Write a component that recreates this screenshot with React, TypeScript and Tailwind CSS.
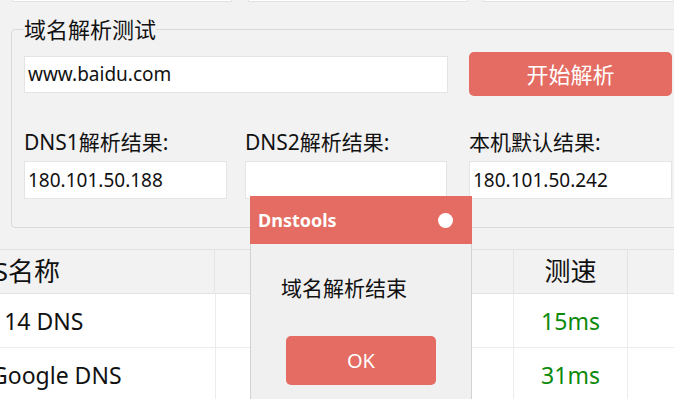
import React from "react";

const FONT = { fontFamily: '"Noto Sans", "Noto Sans CJK SC", sans-serif' };

const RESULTS = [
  { label: "DNS1解析结果:", value: "180.101.50.188", width: "w-[203px]", gap: "" },
  { label: "DNS2解析结果:", value: "", width: "w-[202px]", gap: "ml-[18px]" },
  { label: "本机默认结果:", value: "180.101.50.242", width: "w-[203px]", gap: "ml-[22px]" },
];

const ROWS = [
  { name: "114 DNS", speed: "15ms" },
  { name: "Google DNS", speed: "31ms" },
];

const App: React.FC = () => {
  return (
    <div style={FONT} className="relative h-[399px] w-[674px] overflow-hidden bg-[#f2f2f2] text-[#111]">
      {/* bottoms of the inputs above */}
      <div className="flex h-[2px] items-end">
        <div className="ml-[12px] h-[2px] w-[231px] border-b border-x border-[#e2e2e2] bg-white" />
        <div className="ml-[16px] h-[2px] w-[231px] border-b border-x border-[#e2e2e2] bg-white" />
        <div className="ml-[15px] h-[2px] w-[200px] border-b border-x border-[#e2e2e2] bg-white" />
      </div>

      <fieldset className="ml-[11px] mt-[12px] w-[700px] rounded-[4px] border border-[#dadada] pb-[28px]">
        <legend className="ml-[12px] text-[22px] leading-[30px]">域名解析测试</legend>

        <div className="flex items-center pl-[12px] pt-[8px]">
          <div className="flex h-[37px] w-[424px] items-center border border-[#e4e4e4] bg-white px-[3px] text-[19px]">
            www.baidu.com
          </div>
          <button
            type="button"
            className="ml-[21px] h-[44px] w-[203px] rounded-[5px] bg-[#e46c62] text-[22px] text-white"
          >
            开始解析
          </button>
        </div>

        <div className="mt-[31px] flex pl-[12px]">
          {RESULTS.map((r) => (
            <div key={r.label} className={r.gap}>
              <div className="text-[21px] leading-[30px]">{r.label}</div>
              <div
                className={`mt-[4px] flex h-[38px] ${r.width} items-center border border-[#e4e4e4] bg-white px-[3px] text-[19px]`}
              >
                {r.value}
              </div>
            </div>
          ))}
        </div>
      </fieldset>

      {/* results table */}
      <div className="mt-[21px] w-[720px] border-t border-[#e0e0e0]">
        <div className="flex h-[44px] border-b border-[#e2e2e2] bg-[#f2f2f2] text-[26px]">
          <div className="flex w-[215px] items-center overflow-hidden border-r border-[#e4e4e4]">
            <span className="ml-[-45px] whitespace-nowrap">DNS名称</span>
          </div>
          <div className="w-[299px] border-r border-[#e4e4e4]" />
          <div className="flex w-[114px] items-center justify-center border-r border-[#e4e4e4]">测速</div>
          <div className="flex-1" />
        </div>
        {ROWS.map((row) => (
          <div key={row.name} className="flex h-[54px] border-b border-[#ececec] bg-white text-[23px]">
            <div className="flex w-[216px] items-center overflow-hidden border-r border-[#ececec]">
              <span className="ml-[-9px] mt-[2px] whitespace-nowrap">{row.name}</span>
            </div>
            <div className="w-[298px] border-r border-[#ececec]" />
            <div className="flex w-[114px] items-center justify-center border-r border-[#ececec] pt-[2px] text-[#0b8a0b]">
              {row.speed}
            </div>
            <div className="flex-1" />
          </div>
        ))}
      </div>

      {/* message box */}
      <div className="absolute left-[250px] top-[196px] flex h-[220px] w-[222px] flex-col">
        <div className="flex h-[48px] items-center justify-between bg-[#e46c62] pl-[8px] pr-[19px]">
          <span className="text-[18px] font-bold text-white">Dnstools</span>
          <span className="h-[15px] w-[15px] rounded-full bg-white" />
        </div>
        <div className="flex-1 border-x border-[#d2d2d2] bg-[#f0f0f0]">
          <div className="mt-[29px] pl-[30px] text-[21px] leading-[30px]">域名解析结束</div>
          <button
            type="button"
            className="ml-[35px] mt-[33px] h-[49px] w-[150px] rounded-[5px] bg-[#e46c62] text-[20px] text-white"
          >
            OK
          </button>
        </div>
      </div>
    </div>
  );
};

export default App;
